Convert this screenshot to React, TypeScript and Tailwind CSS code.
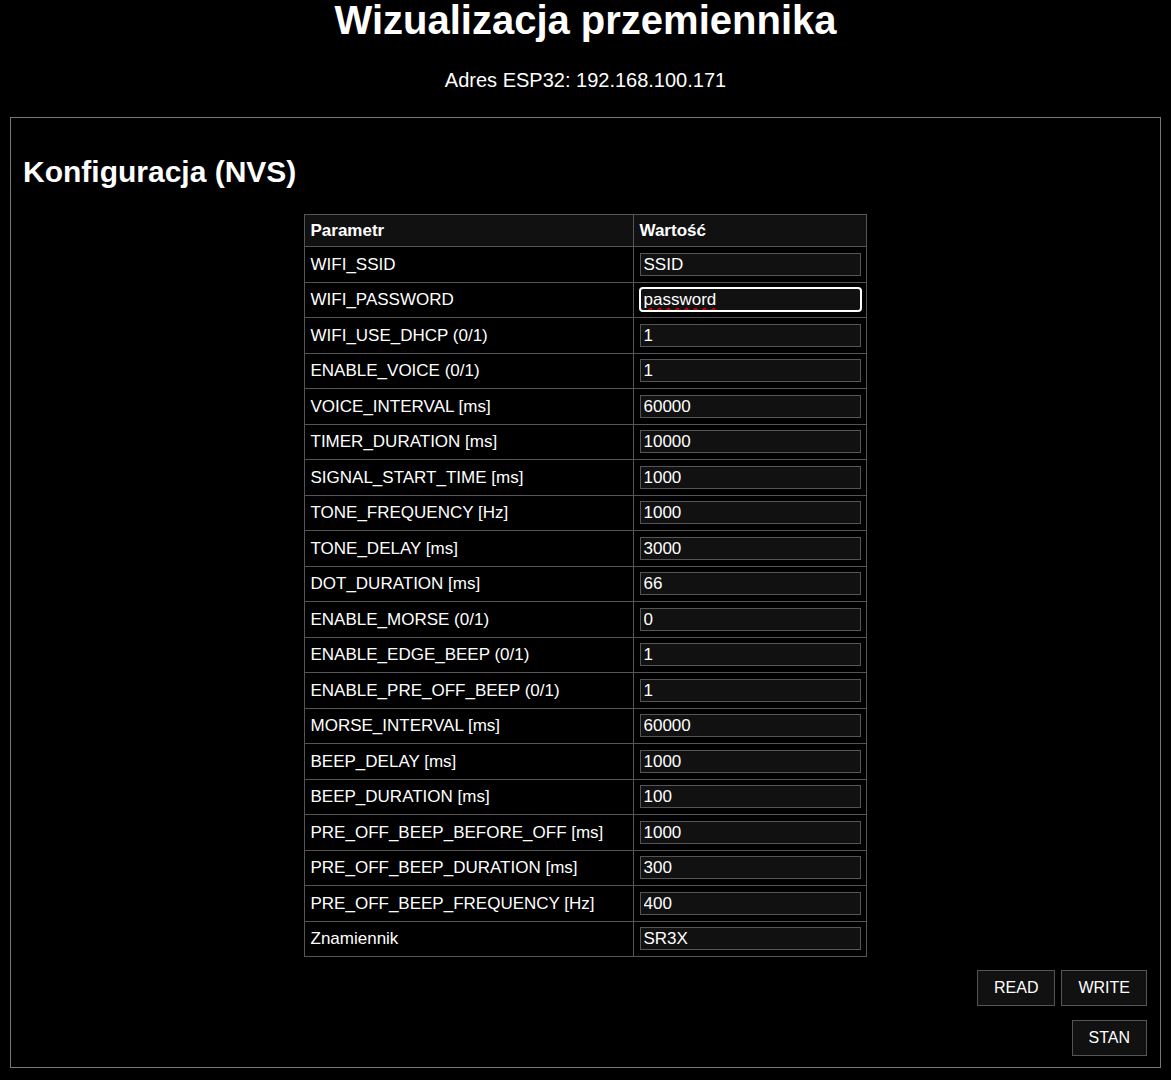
import React from 'react';

// NVS parameters shown in the config table: label + current value
const params: { name: string; value: string }[] = [
  { name: 'WIFI_SSID', value: 'SSID' },
  { name: 'WIFI_PASSWORD', value: 'password' },
  { name: 'WIFI_USE_DHCP (0/1)', value: '1' },
  { name: 'ENABLE_VOICE (0/1)', value: '1' },
  { name: 'VOICE_INTERVAL [ms]', value: '60000' },
  { name: 'TIMER_DURATION [ms]', value: '10000' },
  { name: 'SIGNAL_START_TIME [ms]', value: '1000' },
  { name: 'TONE_FREQUENCY [Hz]', value: '1000' },
  { name: 'TONE_DELAY [ms]', value: '3000' },
  { name: 'DOT_DURATION [ms]', value: '66' },
  { name: 'ENABLE_MORSE (0/1)', value: '0' },
  { name: 'ENABLE_EDGE_BEEP (0/1)', value: '1' },
  { name: 'ENABLE_PRE_OFF_BEEP (0/1)', value: '1' },
  { name: 'MORSE_INTERVAL [ms]', value: '60000' },
  { name: 'BEEP_DELAY [ms]', value: '1000' },
  { name: 'BEEP_DURATION [ms]', value: '100' },
  { name: 'PRE_OFF_BEEP_BEFORE_OFF [ms]', value: '1000' },
  { name: 'PRE_OFF_BEEP_DURATION [ms]', value: '300' },
  { name: 'PRE_OFF_BEEP_FREQUENCY [Hz]', value: '400' },
  { name: 'Znamiennik', value: 'SR3X' },
];

const font = { fontFamily: '"Liberation Sans", Arial, sans-serif' };

function Button({ label }: { label: string }) {
  return (
    <button className="h-[36px] px-[16px] bg-[#111] border border-[#555] text-white text-[16px] leading-none">
      {label}
    </button>
  );
}

export default function App() {
  return (
    <div className="min-h-[1080px] bg-black text-white" style={font}>
      {/* Header */}
      <h1 className="text-center text-[40px] font-bold leading-[40px]">Wizualizacja przemiennika</h1>
      <p className="text-center text-[20px] leading-[23px] mt-[29px]">Adres ESP32: 192.168.100.171</p>

      {/* Config panel */}
      <section className="mx-[10px] mt-[25px] border border-[#777] pl-[12px] pr-[13px] pt-[39px] pb-[11px]">
        <h2 className="text-[30px] font-bold leading-[30px]">Konfiguracja (NVS)</h2>

        <table className="mt-[27px] mx-auto w-[563px] table-fixed border-collapse text-[17px]">
          <thead>
            <tr className="h-[32px] bg-[#111]">
              <th className="w-[329px] border border-[#555] px-[6px] text-left font-bold">Parametr</th>
              <th className="border border-[#555] px-[6px] text-left font-bold">Wartość</th>
            </tr>
          </thead>
          <tbody>
            {params.map((p) => {
              const active = p.name === 'WIFI_PASSWORD';
              return (
                <tr key={p.name} className="h-[35.5px]">
                  <td className="border border-[#555] px-[6px] py-0 align-middle whitespace-nowrap">{p.name}</td>
                  <td className="border border-[#555] px-[6px] py-0 align-middle">
                    {active ? (
                      <input
                        defaultValue={p.value}
                        spellCheck
                        className="block w-[223px] -ml-px h-[25px] bg-[#111] border-2 border-white rounded-[4px] px-[3px] text-[17px] text-white outline-none underline decoration-wavy decoration-[#c00] underline-offset-2"
                        style={font}
                      />
                    ) : (
                      <input
                        defaultValue={p.value}
                        className="block w-[221px] h-[23px] bg-[#111] border border-[#555] px-[3px] text-[17px] text-white outline-none"
                        style={font}
                      />
                    )}
                  </td>
                </tr>
              );
            })}
          </tbody>
        </table>

        {/* Actions */}
        <div className="mt-[13px] flex justify-end gap-[6px]">
          <Button label="READ" />
          <Button label="WRITE" />
        </div>
        <div className="mt-[14px] flex justify-end">
          <Button label="STAN" />
        </div>
      </section>
    </div>
  );
}
